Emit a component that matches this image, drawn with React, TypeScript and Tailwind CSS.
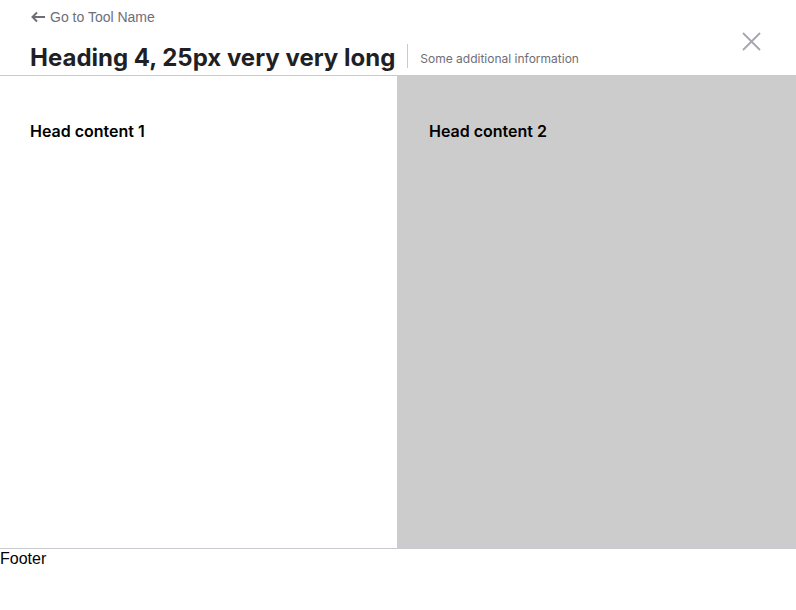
export default function App() {
  return (
    <div className="min-h-screen bg-white font-['Inter',sans-serif]">
      {/* Header */}
      <header className="relative h-[76px] border-b border-[#c9c9d1] px-[30px]">
        <a
          href="#"
          className="flex items-center gap-[4px] pt-[9px] font-['Liberation_Sans',sans-serif] text-[14px] leading-[16px] text-[#6e6e78]"
        >
          <svg width="15" height="12" viewBox="0 0 15 12" fill="none" stroke="currentColor" strokeWidth="2" className="ml-[1px]">
            <path d="M14 6H2" />
            <path d="M6 1.5L1.5 6L6 10.5" />
          </svg>
          Go to Tool Name
        </a>
        <div className="mt-[18px] flex items-end">
          <h4 className="pr-[12px] text-[24px] font-bold leading-[29px] text-[#1f1f24]">
            Heading 4, 25px very very long
          </h4>
          <div className="mb-[4px] flex h-[24px] items-end border-l border-[#c9c9d1] pl-[12px] text-[12px] leading-[16px] text-[#6e6e78]">
            <span className="mb-[1px]">Some additional information</span>
          </div>
        </div>
        <button className="absolute right-[35px] top-[32px] text-[#a6a6ae]">
          <svg width="19" height="19" viewBox="0 0 19 19" stroke="currentColor" strokeWidth="1.8" fill="none">
            <path d="M1 1L18 18M18 1L1 18" />
          </svg>
        </button>
      </header>

      {/* Content */}
      <main className="grid h-[473px] grid-cols-[397px_1fr] border-b border-[#c9c9d1]">
        <section className="px-[30px] pt-[43px]">
          <h5 className="text-[16px] font-semibold leading-[24px] text-black">Head content 1</h5>
        </section>
        <section className="bg-[#cccccc] px-[32px] pt-[43px]">
          <h5 className="text-[16px] font-semibold leading-[24px] text-black">Head content 2</h5>
        </section>
      </main>

      <footer className="font-['Liberation_Sans',sans-serif] text-[16px] leading-[20px] text-black">Footer</footer>
    </div>
  );
}
